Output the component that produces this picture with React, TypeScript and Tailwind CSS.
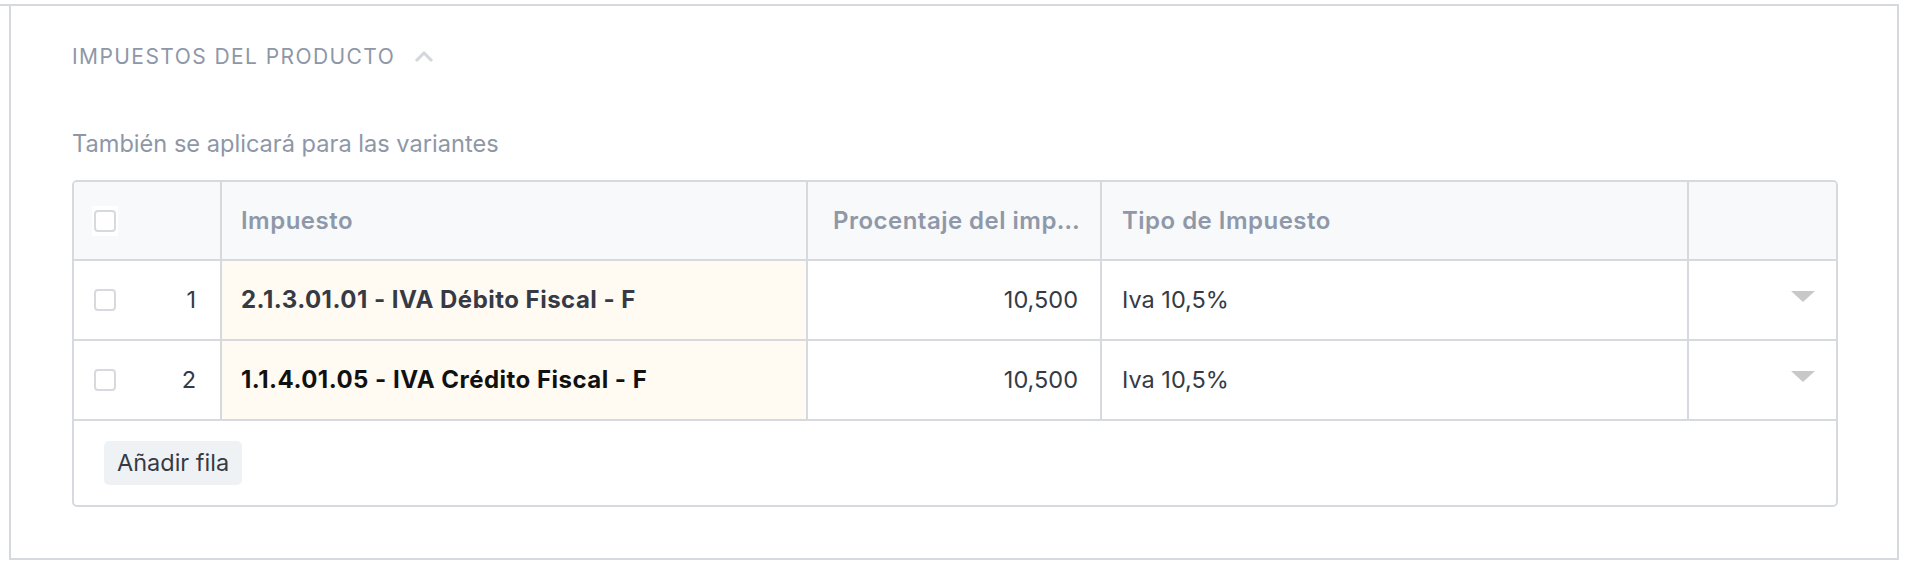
import React from "react";

const font = { fontFamily: "Inter, 'Noto Sans', sans-serif" };

function Checkbox() {
  return (
    <div className="w-[22px] h-[22px] rounded-[4px] border-2 border-[#d6dadf] bg-white" />
  );
}

function Caret() {
  return (
    <svg width="24" height="11" viewBox="0 0 24 11">
      <polygon points="0,0 24,0 12,11" fill="#c8c8c8" />
    </svg>
  );
}

const rows = [
  { n: 1, name: "2.1.3.01.01 - IVA Débito Fiscal - F", pct: "10,500", tipo: "Iva 10,5%", dark: false },
  { n: 2, name: "1.1.4.01.05 - IVA Crédito Fiscal - F", pct: "10,500", tipo: "Iva 10,5%", dark: true },
];

export default function App() {
  return (
    <div className="w-[1908px] h-[566px] bg-white overflow-hidden" style={font}>
      <div className="mt-[4px] h-[2px] w-[1899px] bg-[#d6dadf]" />
      <div className="ml-[9px] w-[1890px] h-[554px] border-x-2 border-b-2 border-[#d6dadf] pl-[61px] pt-[37px]">
        <div className="flex items-center h-[28px]">
          <span className="text-[21px] leading-[28px] tracking-[0.068em] text-[#8e97a7] uppercase">
            Impuestos del producto
          </span>
          <svg className="ml-[19px]" width="20" height="12" viewBox="0 0 20 12">
            <polyline points="2,10 10,2 18,10" fill="none" stroke="#d3d7dc" strokeWidth="3" />
          </svg>
        </div>
        <div className="mt-[57px] text-[23.6px] leading-[32px] text-[#8e97a7]">
          También se aplicará para las variantes
        </div>
        <div className="mt-[20px] w-[1766px] border-2 border-[#d6dadf] rounded-[5px] overflow-hidden">
          <div className="flex h-[79px] bg-[#f7f9fb] border-b-2 border-[#d6dadf] text-[24px] tracking-[0.02em] font-semibold text-[#8f98a8]">
            <div className="w-[148px] border-r-2 border-[#d6dadf] flex items-center pl-[18px]">
              <div className="bg-white p-[2px] py-[4px]">
                <Checkbox />
              </div>
            </div>
            <div className="w-[586px] border-r-2 border-[#d6dadf] flex items-center pl-[19px]">
              Impuesto
            </div>
            <div className="w-[294px] border-r-2 border-[#d6dadf] flex items-center pl-[25px] pr-[20px] min-w-0">
              <span className="truncate block min-w-0">Procentaje del impuesto</span>
            </div>
            <div className="w-[587px] border-r-2 border-[#d6dadf] flex items-center pl-[20px]">
              Tipo de Impuesto
            </div>
            <div className="flex-1" />
          </div>
          {rows.map((r) => (
            <div key={r.n} className="flex h-[80px] border-b-2 border-[#d6dadf] text-[23.5px] text-[#363a45]">
              <div className="w-[148px] border-r-2 border-[#d6dadf] flex items-center justify-between pl-[20px] pr-[24px]">
                <Checkbox />
                <span>{r.n}</span>
              </div>
              <div
                className={
                  "w-[586px] border-r-2 border-[#d6dadf] bg-[#fffbf3] flex items-center pl-[19px] font-bold text-[24px] tracking-[0.02em] " +
                  (r.dark ? "text-[#111111]" : "text-[#363a45]")
                }
              >
                {r.name}
              </div>
              <div className="w-[294px] border-r-2 border-[#d6dadf] flex items-center justify-end pr-[22px]">
                {r.pct}
              </div>
              <div className="w-[587px] border-r-2 border-[#d6dadf] flex items-center pl-[20px]">
                {r.tipo}
              </div>
              <div className="flex-1 flex items-center justify-end pr-[21px] pb-[8px]">
                <Caret />
              </div>
            </div>
          ))}
          <div className="h-[84px] pl-[30px] pt-[20px]">
            <button className="h-[44px] px-[13px] rounded-[5px] bg-[#eff2f5] text-[23.5px] text-[#363a45]">
              Añadir fila
            </button>
          </div>
        </div>
      </div>
    </div>
  );
}
